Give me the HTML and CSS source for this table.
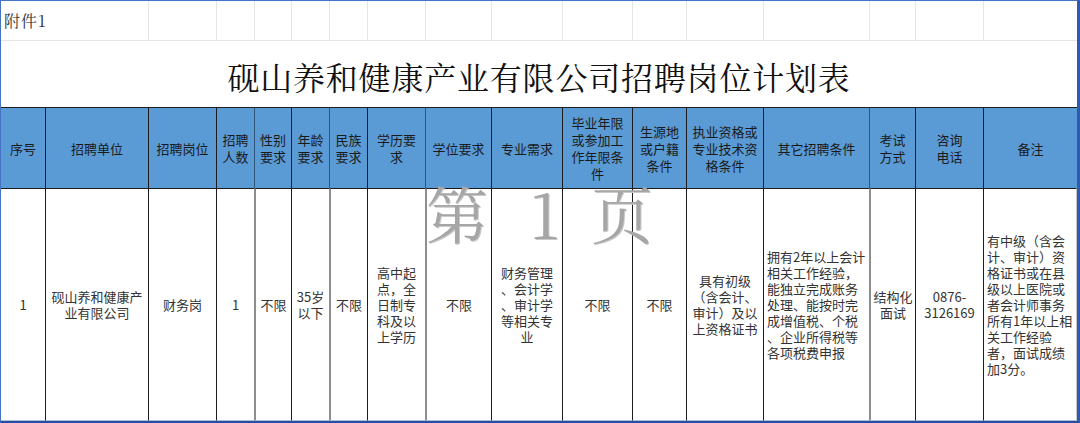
FILE: index.html
```html
<!DOCTYPE html>
<html lang="zh-CN">
<head>
<meta charset="utf-8">
<title>砚山养和健康产业有限公司招聘岗位计划表</title>
<link rel="stylesheet" href="styles.css">
</head>
<body>
<div class="sheet">
  <div class="grid">
    <div class="r1 r1-first">附件1</div>
    <div class="r1"></div><div class="r1"></div><div class="r1"></div><div class="r1"></div>
    <div class="r1"></div><div class="r1"></div><div class="r1"></div><div class="r1"></div>
    <div class="r1"></div><div class="r1"></div><div class="r1"></div><div class="r1"></div>
    <div class="r1"></div><div class="r1"></div><div class="r1"></div>

    <div class="title">砚山养和健康产业有限公司招聘岗位计划表</div>

    <div class="h first">序号</div>
    <div class="h">招聘单位</div>
    <div class="h">招聘岗位</div>
    <div class="h">招聘<br>人数</div>
    <div class="h g">性别<br>要求</div>
    <div class="h">年龄<br>要求</div>
    <div class="h g">民族<br>要求</div>
    <div class="h">学历要<br>求</div>
    <div class="h g">学位要求</div>
    <div class="h">专业需求</div>
    <div class="h">毕业年限<br>或参加工<br>作年限条<br>件</div>
    <div class="h">生源地<br>或户籍<br>条件</div>
    <div class="h">执业资格或<br>专业技术资<br>格条件</div>
    <div class="h">其它招聘条件</div>
    <div class="h g">考试<br>方式</div>
    <div class="h">咨询<br>电话</div>
    <div class="h">备注</div>

    <div class="d first">1</div>
    <div class="d">砚山养和健康产<br>业有限公司</div>
    <div class="d">财务岗</div>
    <div class="d">1</div>
    <div class="d g">不限</div>
    <div class="d">35岁<br>以下</div>
    <div class="d g">不限</div>
    <div class="d">高中起<br>点，全<br>日制专<br>科及以<br>上学历</div>
    <div class="d g">不限</div>
    <div class="d">财务管理<br>、会计学<br>、审计学<br>等相关专<br>业</div>
    <div class="d">不限</div>
    <div class="d">不限</div>
    <div class="d">具有初级<br>（含会计、<br>审计）及以<br>上资格证书</div>
    <div class="d left">拥有2年以上会计<br>相关工作经验，<br>能独立完成账务<br>处理、能按时完<br>成增值税、个税<br>、企业所得税等<br>各项税费申报</div>
    <div class="d g">结构化<br>面试</div>
    <div class="d">0876-<br>3126169</div>
    <div class="d left last">有中级（含会<br>计、审计）资<br>格证书或在县<br>级以上医院或<br>者会计师事务<br>所有1年以上相<br>关工作经验<br>者，面试成绩<br>加3分。</div>
  </div>
  <div class="watermark"><span class="wm1">第</span><span class="wm2">1</span><span class="wm3">页</span></div>
</div>
</body>
</html>
```

FILE: styles.css
```css
html, body {
  margin: 0;
  padding: 0;
  background: #ffffff;
}

.sheet {
  position: relative;
  width: 1080px;
  height: 423px;
  box-sizing: border-box;
  border-left: 1px solid #4472c4;
  border-top: 1px solid #4472c4;
  border-right: 3px solid #2a5cb4;
  border-bottom: 2px solid #2350a6;
  overflow: hidden;
  font-family: "Noto Sans CJK SC", "Noto Sans", sans-serif;
}

.grid {
  display: grid;
  grid-template-columns: 44px 103px 68px 38px 37px 38px 38px 58px 66px 71px 70px 54px 77px 106px 46px 68px 94px;
  grid-template-rows: 39px 67px 81px 233px;
}

.r1 {
  box-sizing: border-box;
  border-left: 1px solid #e6e6e6;
}

.r1-first {
  grid-column: span 2;
  border-left: none;
  display: flex;
  align-items: center;
  padding-left: 3px;
  font-family: "Noto Serif CJK SC", "Liberation Serif", "Noto Sans CJK SC", serif;
  font-size: 16px;
  letter-spacing: 1px;
  color: #333333;
}

.title {
  grid-column: 1 / -1;
  box-sizing: border-box;
  border-top: 1px solid #e6e6e6;
  display: flex;
  align-items: center;
  justify-content: center;
  padding-top: 4px;
  font-family: "Noto Serif CJK SC", "Liberation Serif", "Noto Sans CJK SC", serif;
  font-size: 32px;
  letter-spacing: 0.8px;
  color: #111111;
}

.h, .d {
  box-sizing: border-box;
  display: flex;
  align-items: center;
  justify-content: center;
  text-align: center;
  font-size: 13px;
  border-top: 1px solid #1c1c1c;
  border-left: 1px solid #1c1c1c;
  padding: 0 2px;
  white-space: nowrap;
}

.h {
  background: #5b9bd5;
  color: #1a1a1a;
  line-height: 17px;
}

.d {
  background: #ffffff;
  color: #333333;
  line-height: 16px;
  border-bottom: 1px solid #b4bfd4;
}

.first {
  border-left: none;
}

.h.g {
  border-left-color: #2f557a;
}

.d.g {
  border-left: 2px solid #8e8e8e;
}

.d.left {
  justify-content: flex-start;
  text-align: left;
  padding-left: 3px;
}

.d.last {
  border-right: 1px solid #c8c8c8;
}

.watermark {
  position: absolute;
  left: 425px;
  top: 172px;
  height: 80px;
  font-family: "Noto Serif CJK SC", "Liberation Serif", "Noto Sans CJK SC", serif;
  font-size: 62px;
  line-height: 80px;
  color: #a6a6a6;
  text-shadow: 1px 1px 0 #c9c9c9;
  pointer-events: none;
}

.watermark span {
  position: absolute;
  top: 0;
}

.wm1 { left: 0; }
.wm2 { left: 104px; }
.wm3 { left: 165px; }
```
